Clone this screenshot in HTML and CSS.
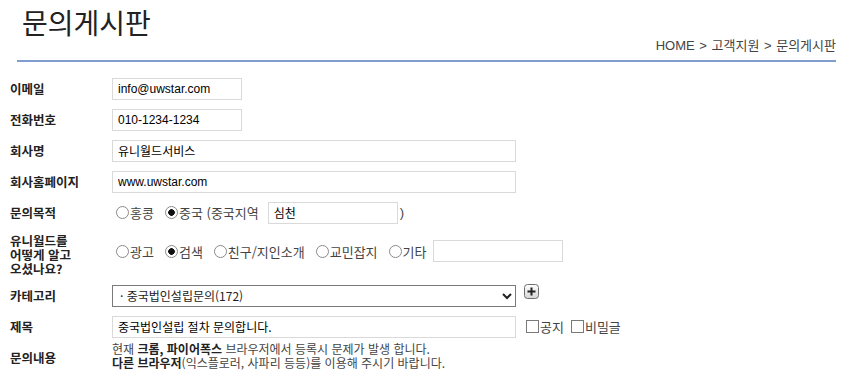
FILE: index.html
```html
<!DOCTYPE html>
<html lang="ko">
<head>
    <meta charset="UTF-8">
    <meta name="viewport" content="width=device-width, initial-scale=1.0">
    <title>문의게시판</title>
    <link rel="stylesheet" href="styles.css">
</head>
<body>

    <!-- Page header -->
    <div class="page-head">
        <h1>문의게시판</h1>
        <div class="location">HOME &gt; 고객지원 &gt; 문의게시판</div>
    </div>

    <!-- Inquiry form -->
    <form class="qna-form">
        <div class="row">
            <label class="label">이메일</label>
            <div class="field"><input type="text" class="inp short" value="info@uwstar.com"></div>
        </div>
        <div class="row">
            <label class="label">전화번호</label>
            <div class="field"><input type="text" class="inp short" value="010-1234-1234"></div>
        </div>
        <div class="row">
            <label class="label">회사명</label>
            <div class="field"><input type="text" class="inp long" value="유니월드서비스"></div>
        </div>
        <div class="row">
            <label class="label">회사홈페이지</label>
            <div class="field"><input type="text" class="inp long" value="www.uwstar.com"></div>
        </div>
        <div class="row">
            <label class="label">문의목적</label>
            <div class="field">
                <label class="opt"><input type="radio" name="purpose">홍콩</label>
                <label class="opt"><input type="radio" name="purpose" checked>중국 (중국지역</label>
                <input type="text" class="inp short area" value="심천">
                <span class="paren">)</span>
            </div>
        </div>
        <div class="row tall">
            <label class="label">유니월드를<br>어떻게 알고<br>오셨나요?</label>
            <div class="field">
                <label class="opt"><input type="radio" name="route">광고</label>
                <label class="opt"><input type="radio" name="route" checked>검색</label>
                <label class="opt"><input type="radio" name="route">친구/지인소개</label>
                <label class="opt"><input type="radio" name="route">교민잡지</label>
                <label class="opt"><input type="radio" name="route">기타</label>
                <input type="text" class="inp short">
            </div>
        </div>
        <div class="row">
            <label class="label">카테고리</label>
            <div class="field top">
                <select class="sel">
                    <option>&middot; 중국법인설립문의(172)</option>
                </select>
                <!-- add category button -->
                <svg class="plus" width="15" height="15" viewBox="0 0 15 15">
                    <defs>
                        <linearGradient id="pg" x1="0" y1="0" x2="0" y2="1">
                            <stop offset="0" stop-color="#ffffff"/>
                            <stop offset="1" stop-color="#d4d4d4"/>
                        </linearGradient>
                    </defs>
                    <rect x="0.5" y="0.5" width="14" height="14" rx="3" fill="url(#pg)" stroke="#6f6f6f"/>
                    <path d="M7.5 3.5v8M3.5 7.5h8" stroke="#222" stroke-width="2"/>
                </svg>
            </div>
        </div>
        <div class="row">
            <label class="label">제목</label>
            <div class="field">
                <input type="text" class="inp long subject" value="중국법인설립 절차 문의합니다.">
                <label class="chk"><input type="checkbox">공지</label>
                <label class="chk"><input type="checkbox">비밀글</label>
            </div>
        </div>
        <div class="row">
            <label class="label">문의내용</label>
            <div class="field notice">
                현재 <b>크롬, 파이어폭스</b> 브라우저에서 등록시 문제가 발생 합니다.<br>
                <b>다른 브라우저</b>(익스플로러, 사파리 등등)를 이용해 주시기 바랍니다.
            </div>
        </div>
    </form>

</body>
</html>
```

FILE: styles.css
```css
body {
    font-family: 'Liberation Sans', 'Noto Sans CJK KR', sans-serif;
    font-size: 12px;
    color: #333;
    background: #fff;
    margin: 0;
    padding: 0;
}

/* header */
.page-head {
    margin-left: 17px;
    width: 819px;
    border-bottom: 2px solid #7f9ecf;
    height: 60px;
}

.page-head h1 {
    margin: 0;
    padding: 2px 0 0 5px;
    font-family: 'Noto Sans CJK KR', sans-serif;
    font-size: 28px;
    font-weight: normal;
    color: #222;
    line-height: 40px;
}

.location {
    text-align: right;
    font-family: 'Liberation Sans', 'Noto Sans CJK KR', sans-serif;
    font-size: 13px;
    color: #444;
    line-height: 16px;
    margin-top: -4px;
    word-spacing: 1px;
}

/* form */
.qna-form {
    margin-top: 11px;
}

.row {
    display: flex;
    align-items: center;
    height: 31px;
}

.row.tall {
    height: 46px;
    margin-bottom: 6px;
}

.label {
    width: 102px;
    padding-left: 10px;
    font-family: 'Noto Sans CJK KR', sans-serif;
    font-weight: bold;
    font-size: 12.5px;
    line-height: 14px;
    color: #222;
}

.row.tall .label {
    margin-top: 8px;
}

.field {
    display: flex;
    align-items: center;
}

.inp {
    box-sizing: border-box;
    height: 22px;
    border: 1px solid #d9d9d9;
    padding: 0 5px;
    font-family: 'Liberation Sans', 'Noto Sans CJK KR', sans-serif;
    font-size: 12px;
    color: #000;
    outline: none;
}

.inp.short {
    width: 130px;
}

.inp.long {
    width: 404px;
}

.inp.area {
    margin-left: 2px;
    font-family: 'Noto Sans CJK KR', sans-serif;
}

.paren {
    margin-left: 2px;
    color: #444;
    font-size: 13px;
}

.opt, .chk {
    display: flex;
    align-items: center;
    font-family: 'Noto Sans CJK KR', sans-serif;
    font-size: 13px;
    color: #444;
    margin-right: 7px;
}

.opt input[type="radio"] {
    appearance: none;
    width: 13px;
    height: 13px;
    margin: 0 1px 0 4px;
    border: 1px solid #8a8a8a;
    border-radius: 50%;
    background: #fff;
}

.opt input[type="radio"]:checked {
    background: radial-gradient(circle, #111 0, #111 3px, #fff 3.6px);
}

.chk input[type="checkbox"] {
    appearance: none;
    width: 13px;
    height: 13px;
    margin: 0 1px 0 0;
    border: 1px solid #7a7a7a;
    background: #fff;
}

.subject {
    margin-right: 10px;
    font-family: 'Noto Sans CJK KR', sans-serif;
}

.field.top {
    align-items: flex-start;
}

.sel {
    box-sizing: border-box;
    width: 404px;
    height: 22px;
    border: 1px solid #7a7a7a;
    border-radius: 0;
    background: #fff;
    font-family: 'Noto Sans CJK KR', sans-serif;
    font-size: 12px;
    color: #222;
    padding: 0 3px;
}

.plus {
    margin: -1px 0 0 8px;
}

.notice {
    display: block;
    font-family: 'Noto Sans CJK KR', sans-serif;
    color: #444;
    line-height: 14px;
    margin-top: -3px;
}

.notice b {
    color: #222;
}
```
